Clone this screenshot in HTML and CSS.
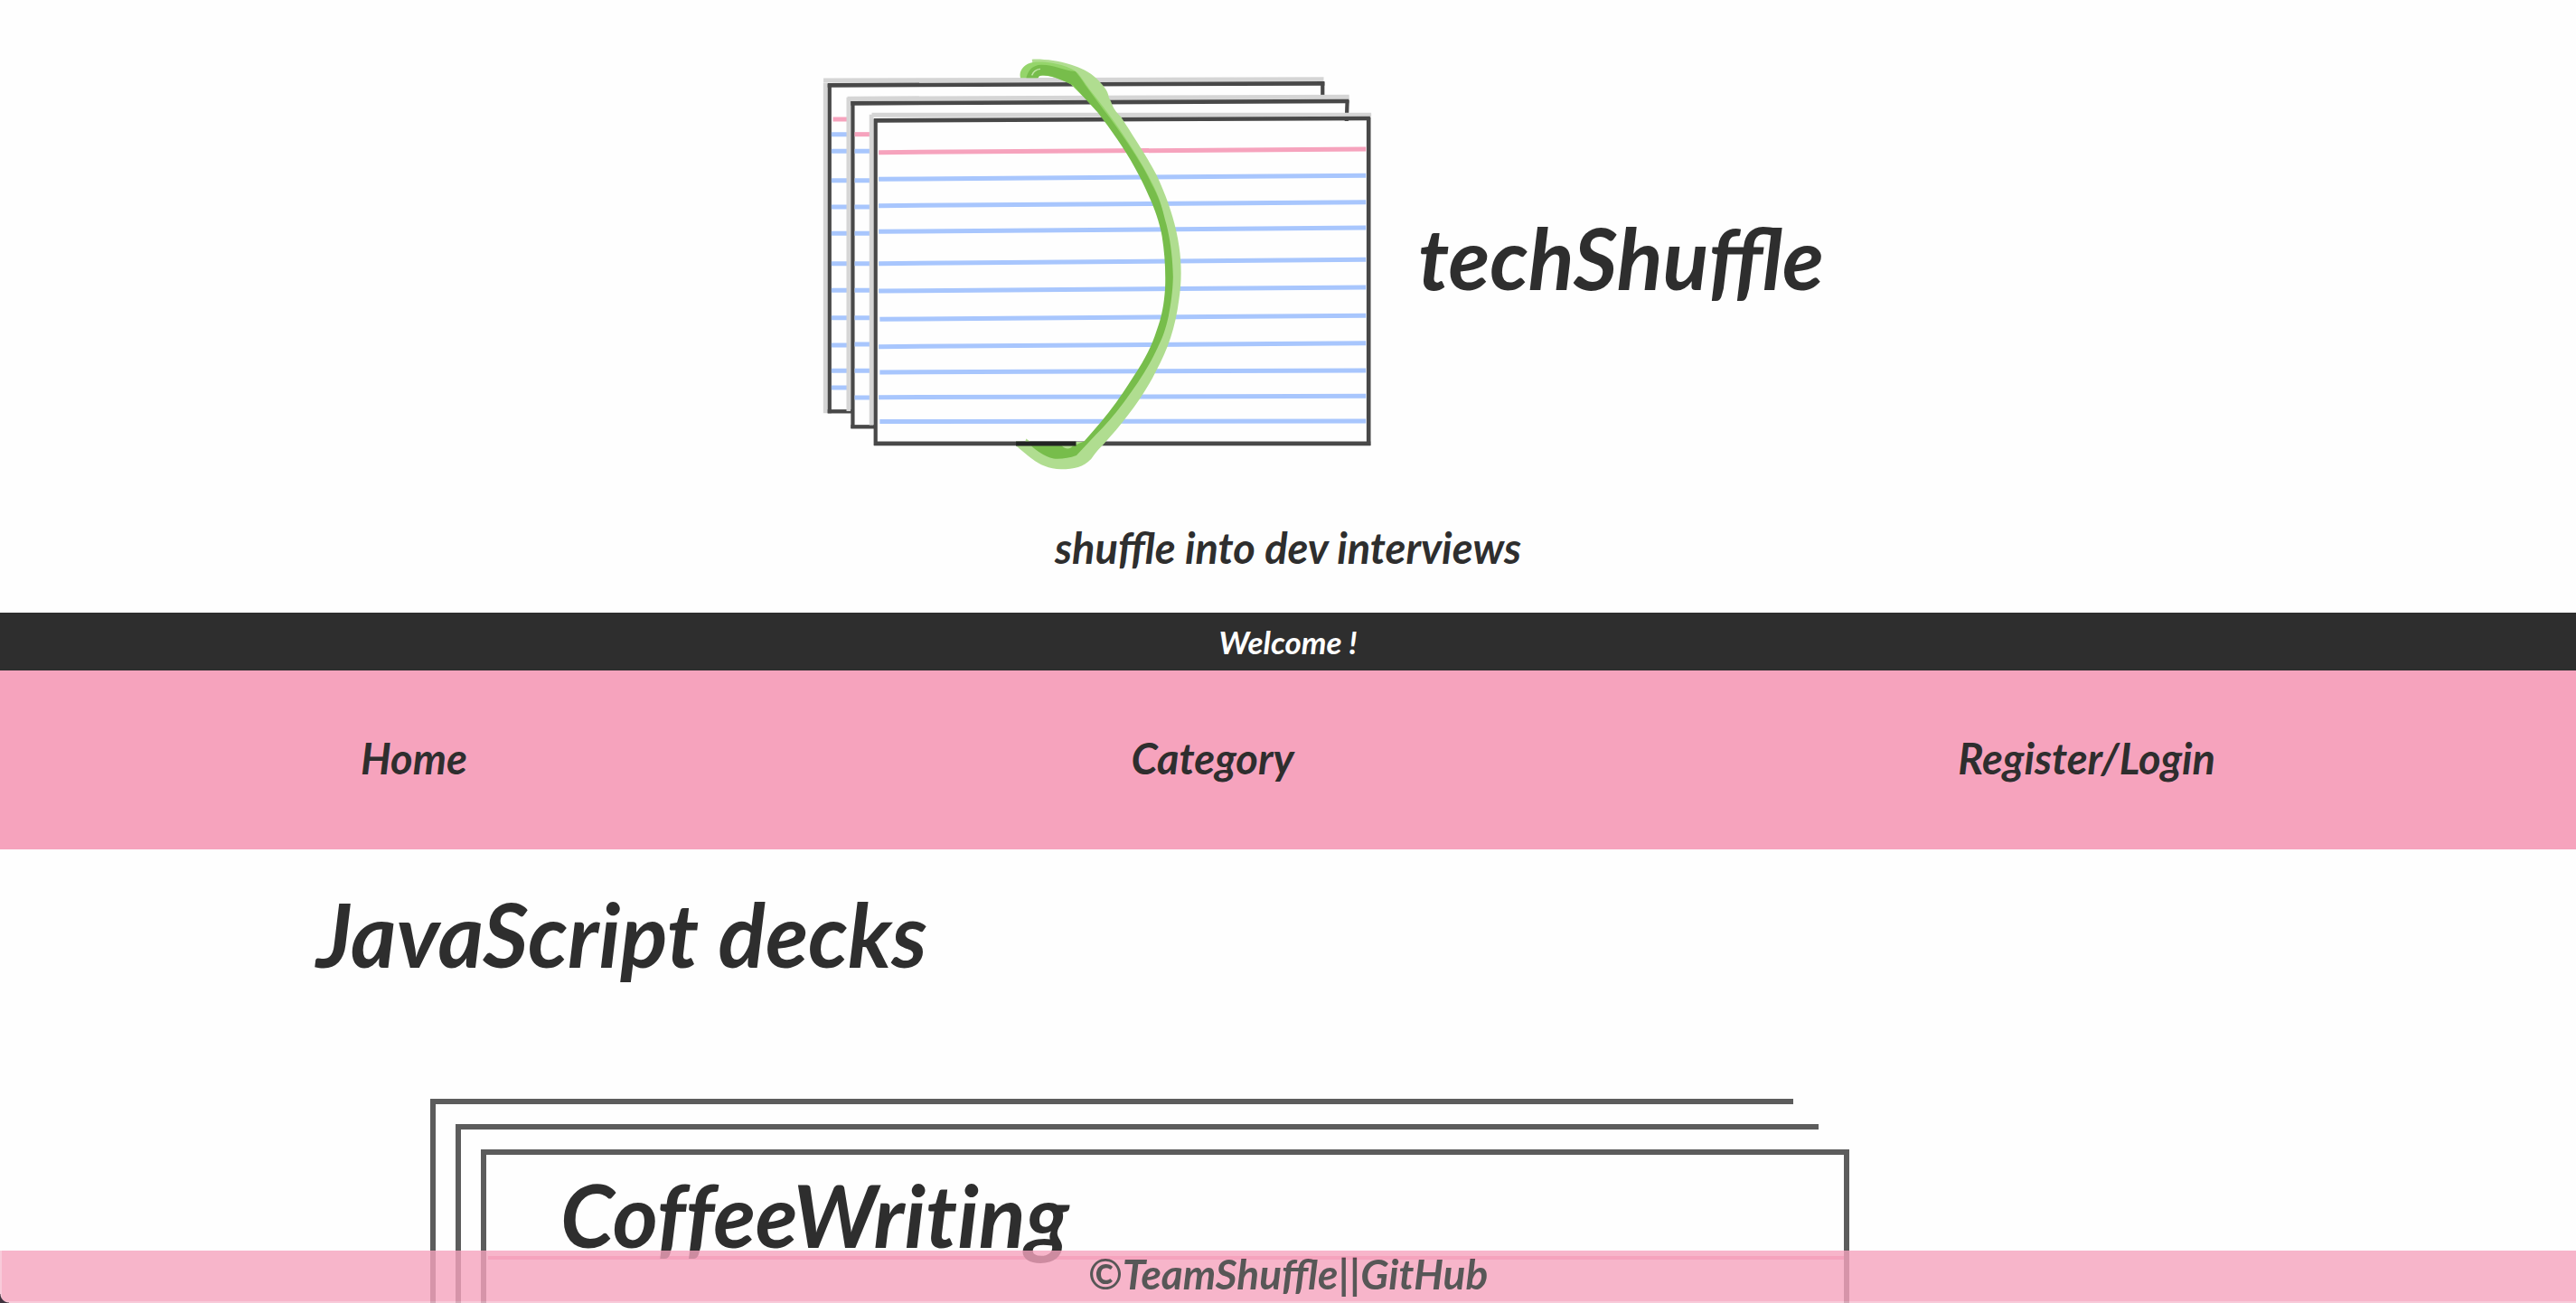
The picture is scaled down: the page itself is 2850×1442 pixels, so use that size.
FILE: index.html
```html
<!DOCTYPE html>
<html lang="en">
<head>
<meta charset="utf-8">
<meta name="viewport" content="width=device-width, initial-scale=1">
<title>techShuffle</title>
<link rel="stylesheet" href="styles.css">
</head>
<body>
<header class="header">
  <div class="brand">
    <svg class="logo" viewBox="-58 0 718 490" role="img" aria-label="Index cards held by a green band">
      <g transform="scale(.4209 .3333)" fill="none">
        <!-- back card -->
        <path d="M50 147L1365 143" stroke="#d5d5d5" stroke-width="15"/>
        <path d="M55 155V1252" stroke="#d5d5d5" stroke-width="11"/>
        <path d="M61 163L1367 157" stroke="#484848" stroke-width="14"/>
        <path d="M66 158V1252" stroke="#484848" stroke-width="10"/>
        <path d="M1362 152V222" stroke="#484848" stroke-width="10"/>
        <path d="M61 1246H126" stroke="#484848" stroke-width="13"/>
        <path d="M75 276H113" stroke="#f6a3bd" stroke-width="15"/>
        <path d="M71 326H112M71 382H112M71 479H112M71 567H112M71 655H112M71 755H112M71 844H112M71 935H112M71 1026H112M71 1111H112M71 1167H112" stroke="#a8c6fd" stroke-width="15"/>
        <!-- middle card -->
        <path d="M113 208L1432 202" stroke="#d5d5d5" stroke-width="16"/>
        <path d="M116 203V1245" stroke="#d5d5d5" stroke-width="11"/>
        <path d="M122 223L1431 216" stroke="#484848" stroke-width="14"/>
        <path d="M127 216V1302" stroke="#484848" stroke-width="10"/>
        <path d="M1427 212L1425 282" stroke="#484848" stroke-width="10"/>
        <path d="M122 1297H187" stroke="#484848" stroke-width="13"/>
        <path d="M132 326H172" stroke="#f6a3bd" stroke-width="15"/>
        <path d="M132 382H172M132 479H172M132 567H172M132 655H172M132 755H172M132 844H172M132 935H172M132 1023H172M132 1111H172M132 1200H172" stroke="#a8c6fd" stroke-width="15"/>
        <!-- front card -->
        <path d="M177 262H1490" stroke="#d5d5d5" stroke-width="15"/>
        <path d="M176 260V1292" stroke="#d5d5d5" stroke-width="11"/>
        <path d="M183 280L1487 273" stroke="#484848" stroke-width="14"/>
        <path d="M187 274V1359" stroke="#484848" stroke-width="10"/>
        <path d="M1483 270V1359" stroke="#484848" stroke-width="11"/>
        <path d="M183 1353H1488" stroke="#484848" stroke-width="14"/>
        <path d="M195 386L1476 375" stroke="#f6a3bd" stroke-width="15"/>
        <path d="M195 475L1476 463M195 563L1476 551M195 649L1476 636M195 755L1476 742M195 846L1476 834M198 940L1476 928M195 1031L1476 1019M198 1116L1476 1110M195 1199L1476 1195M198 1280L1476 1278" stroke="#a8c6fd" stroke-width="15"/>
        <!-- elastic band -->
        <path fill="#b0dd90" d="M598 77C660 74 735 100 766 139C783 160 798 180 800 203L806 218C812 240 818 250 832 268C868 340 900 400 925 460C955 540 976 620 985 700C992 760 991 820 985 870C975 970 955 1040 925 1110C890 1200 840 1280 785 1357C770 1375 762 1390 755 1402C735 1430 710 1438 675 1438C625 1438 595 1400 573 1378L556 1360V1346L580 1347L583 1337L594 1347H745C810 1258 880 1150 910 1070C935 1000 955 900 958 800C958 650 920 540 885 470C855 395 815 320 785 260L700 140L600 92Z"/>
        <path fill="#95d56b" d="M568 139C562 115 578 92 600 87C650 80 710 105 722 128L750 178C815 280 870 380 915 490C930 530 940 560 944 600L930 590C895 470 840 370 780 260L700 160C670 140 640 128 615 130L615 139Z"/>
        <path fill="#77bd4b" d="M583 139C588 112 600 96 622 95C655 94 680 113 712 117C722 132 730 145 738 162C760 200 780 235 802 270C825 310 845 345 865 385C885 425 900 455 912 490C930 530 941 570 948 610C960 660 968 730 969 800C968 850 963 890 957 930C950 970 942 1000 930 1030C905 1100 875 1155 840 1215C815 1258 790 1293 765 1325L715 1392C695 1401 675 1405 655 1403C630 1395 608 1375 596 1360H676C688 1374 699 1370 704 1362L735 1346C765 1302 795 1260 820 1215C845 1170 865 1130 880 1100C900 1060 915 1020 925 980C940 930 945 890 948 840C950 780 947 720 940 665C932 610 918 565 905 530C895 500 883 470 870 440C840 370 805 310 772 255L706 163C675 145 650 127 622 131C614 133 618 136 612 139Z"/>
        <path stroke="#c3e6a8" stroke-width="4" d="M598 130C602 116 610 110 620 109"/>
        <path stroke="#222423" stroke-width="15" d="M556 1353H714"/>
      </g>
    </svg>
    <h1 class="brand-name">techShuffle</h1>
  </div>
  <p class="tagline">shuffle into dev interviews</p>
</header>
<p class="welcome">Welcome !</p>
<nav class="nav">
  <a href="#home">Home</a>
  <a href="#category">Category</a>
  <a href="#login">Register/Login</a>
</nav>
<main class="main" id="home">
  <h2 class="title">JavaScript decks</h2>
  <section class="deck">
    <article class="card">
      <h3 class="card-title">CoffeeWriting</h3>
    </article>
  </section>
</main>
<footer class="footer">©TeamShuffle||<a href="#github">GitHub</a></footer>
</body>
</html>
```
FILE: styles.css
```css
* {
  box-sizing: border-box;
}

body {
  display: flex;
  flex-direction: column;
  height: 100vh;
  margin: 0;
  overflow: hidden;
  background: #fefefe;
  color: #2e2e2e;
  font-family: Lato, sans-serif;
  font-style: italic;
  font-weight: 700;
}

h1, h2, h3, p {
  margin: 0;
  font-weight: 700;
}

a {
  color: inherit;
  text-decoration: none;
}

.header {
  padding: 40px 0 44px;
}

.brand {
  display: flex;
  justify-content: center;
  align-items: center;
  gap: 19px;
}

.logo {
  display: block;
  width: 718px;
  height: 490px;
}

.brand-name {
  font-size: 94px;
  line-height: 112px;
}

.tagline {
  padding-top: 48px;
  font-size: 47px;
  line-height: 56px;
  text-align: center;
}

.welcome {
  background: #2e2e2e;
  color: #fff;
  font-size: 35px;
  line-height: 64px;
  text-align: center;
}

.nav {
  display: flex;
  justify-content: space-between;
  padding: 69px 14% 73px;
  background: #f6a3bd;
  font-size: 47px;
  line-height: 56px;
}

.main {
  display: flex;
  flex: 1;
  flex-direction: column;
  min-height: 0;
  padding: 36px 350px 0;
}

.title {
  font-size: 97px;
  line-height: 116px;
}

/* Two more cards peek out behind the front one */
.deck {
  position: relative;
  display: flex;
  flex: 1;
  width: 73%;
  margin: 124px 0 0 126px;
  padding: 56px 0 0 56px;
}

.deck::before,
.deck::after {
  content: "";
  position: absolute;
  inset: 0 62px 0 0;
  border: solid #5c5c5c;
  border-width: 6px 0 0 6px;
}

.deck::after {
  inset: 28px 34px 0 28px;
}

.card {
  position: relative;
  z-index: 1;
  flex: 1;
  border: 6px solid #5c5c5c;
  border-bottom: 0;
  background: #fefefe;
}

.card-title {
  margin-left: 2px;
  padding: 20px 0 0 80px;
  border-bottom: 4px solid #f6a3bd;
  font-size: 96px;
  font-variant-ligatures: none;
  line-height: 92px;
}

.footer {
  position: fixed;
  inset: auto 0 0;
  z-index: 2;
  padding-bottom: 6px;
  background: #f6a3bd;
  box-shadow: inset 2px -2px #f7bfd1;
  font-size: 46px;
  line-height: 52px;
  text-align: center;
  opacity: 0.8;
}

.footer::before {
  content: "";
  position: absolute;
  bottom: 0;
  left: 0;
  width: 10px;
  height: 10px;
  background: radial-gradient(circle at 100% 0, transparent 9px, #10000e 10px);
}
```
